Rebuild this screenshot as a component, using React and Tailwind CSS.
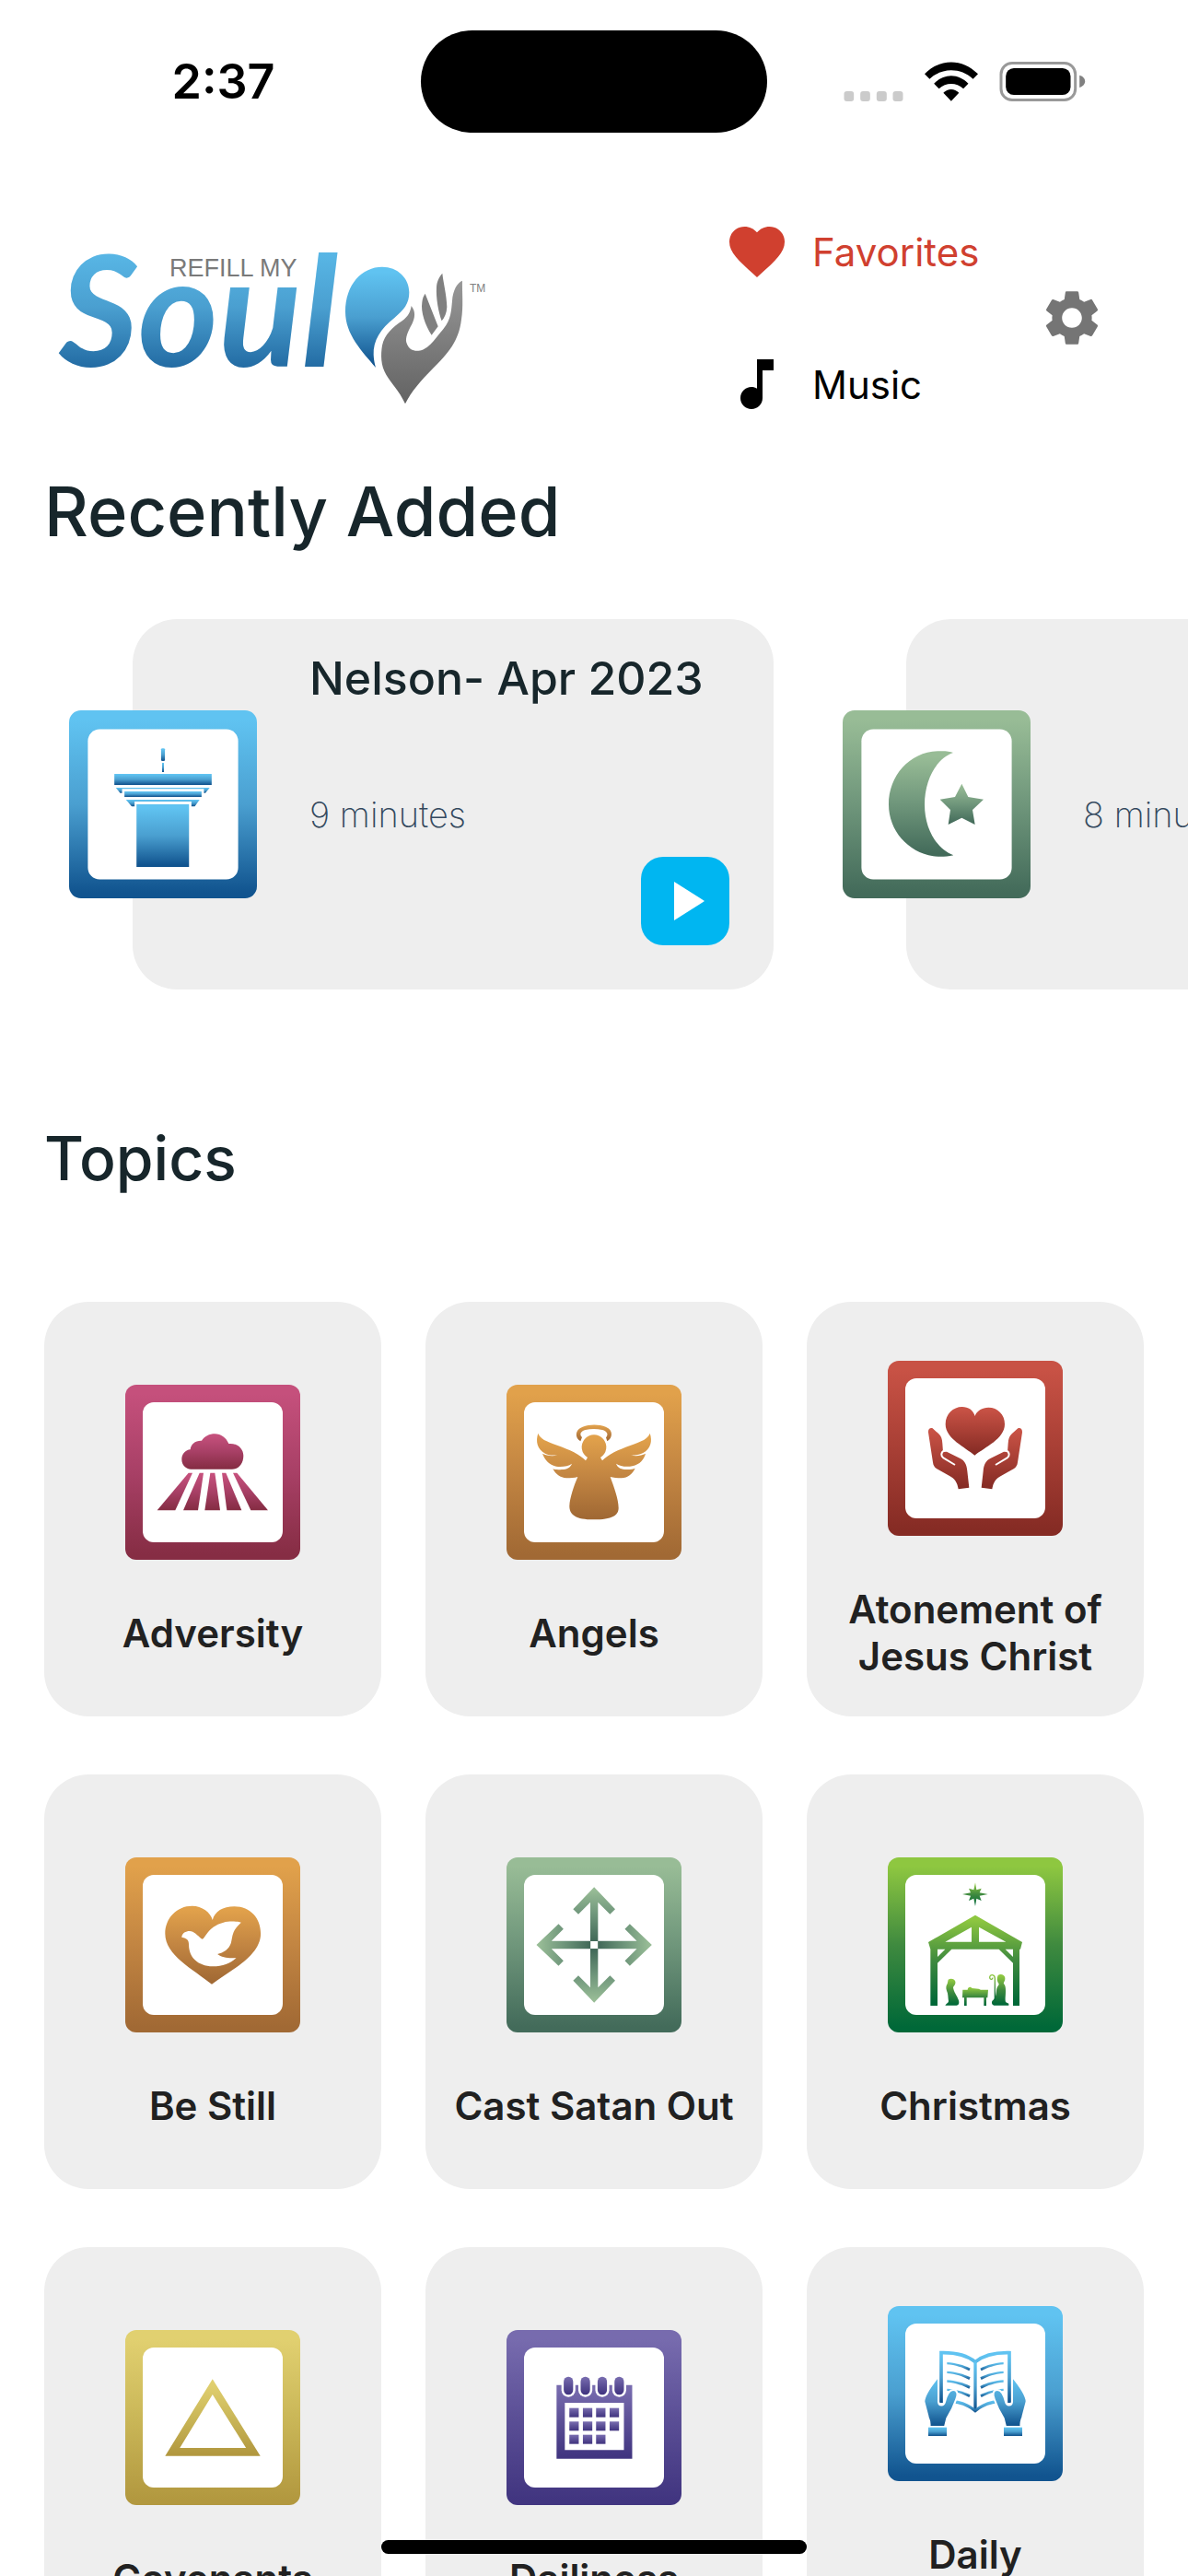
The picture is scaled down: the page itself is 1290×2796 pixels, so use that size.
import React from "react";
import { MdFavorite, MdMusicNote, MdSettings, MdPlayArrow } from "react-icons/md";

const PALETTE = {
  blue: ["#60c3f1", "#4a9fd0", "#11548f"],
  sage: ["#98bc96", "#6f967b", "#436b5a"],
  rose: ["#c5507c", "#a84066", "#862d44"],
  amber: ["#e1a14b", "#c28542", "#a16934"],
  red: ["#c85245", "#a83f35", "#852b24"],
  green: ["#8ec740", "#3f8a3f", "#006838"],
  gold: ["#e1d070", "#cab758", "#b2983f"],
  purple: ["#776bae", "#5b4f96", "#413580"],
};

function Gradients() {
  return (
    <svg className="absolute size-0" aria-hidden="true">
      <defs>
        {Object.entries(PALETTE).map(([name, stops]) => (
          <linearGradient key={name} id={name} x1="0" y1="0" x2="0" y2="1">
            <stop offset="0.05" stopColor={stops[0]} />
            <stop offset="0.5" stopColor={stops[1]} />
            <stop offset="0.97" stopColor={stops[2]} />
          </linearGradient>
        ))}
        <linearGradient id="gray" x1="0" y1="0" x2="0" y2="1">
          <stop offset="0" stopColor="#989898" />
          <stop offset="1" stopColor="#626262" />
        </linearGradient>
      </defs>
    </svg>
  );
}

function Framed({ color, box, className, children }) {
  const paint = `url(#${color})`;
  return (
    <svg viewBox="0 0 570 570" className={className} aria-hidden="true">
      <rect width="570" height="570" rx="36" fill={paint} />
      <rect x="57" y="57" width="456" height="456" rx="36" fill="#fff" />
      <svg width="570" height="570" viewBox={box} preserveAspectRatio="none" fill={paint}>
        {children}
      </svg>
    </svg>
  );
}

const PulpitIcon = ({ className }) => (
  <Framed color="blue" box="67 363 390 612" className={className}>
    <rect x="258" y="487" width="8" height="41" rx="3" />
    <rect x="260" y="534" width="4" height="30" />
    <rect x="161" y="570" width="202" height="36" />
    <path d="M164 615H359L350 632H347V619H177V632H173Z" />
    <rect x="182" y="627" width="160" height="18" />
    <path d="M185 654H338L328 676H321V660H203V676H197Z" />
    <rect x="207" y="669" width="109" height="204" />
  </Framed>
);

const CrescentIcon = ({ className }) => (
  <Framed color="sage" box="105 363 612 612" className={className}>
    <path d="M465 501C410 520 372 590 372 670C372 750 412 815 466 835C440 841 415 840 400 838C318 825 255 755 255 670C255 575 325 496 420 496C438 495 455 497 465 501Z" />
    <path d="M493 602L514 645L564 653L528 687L536 735L493 713L449 735L456 687L422 653L471 645Z" />
  </Framed>
);

const AdversityIcon = ({ className }) => (
  <Framed color="rose" box="48 67 570 570" className={className}>
    <path d="M262 342C245 342 232 328 232 310C232 292 245 279 260 278C262 260 276 248 297 249C306 235 322 227 340 227C360 227 377 240 385 259C412 256 433 275 433 298C433 324 418 342 396 342Z" />
    <path d="M254 354H267L211 476H152Z" />
    <path d="M290 354H303L285 476H237Z" />
    <path d="M325 354H340L357 476H307Z" />
    <path d="M363 354H376L427 476H379Z" />
    <path d="M399 354H412L513 476H457Z" />
  </Framed>
);

const AngelIcon = ({ className }) => (
  <Framed color="amber" box="60 67 570 570" className={className}>
    <path d="M301 251C283 240 281 214 308 204C330 195 362 195 383 204C409 214 406 240 388 251L384 239C394 227 386 218 372 214C354 210 334 210 317 214C303 218 296 227 306 238Z" />
    <path d="M163 225C168 242 190 252 225 264C265 278 300 294 318 314L324 304A40 40 0 1 1 366 304L372 314C390 294 425 278 465 264C500 252 522 242 527 225C536 250 530 275 505 289C493 295 480 298 465 296C480 301 500 298 513 291C508 310 495 326 470 332C450 336 428 332 417 324C422 338 435 343 452 343C465 343 474 341 479 339C470 358 455 370 435 371C420 371 408 369 398 367C410 400 425 440 425 468C425 492 405 506 344 506C285 506 265 490 265 462C266 435 280 395 292 367C281 370 270 371 255 371C235 370 220 358 211 341C219 344 230 344 240 343C256 343 268 337 273 324C262 332 240 336 222 333C196 326 184 310 177 291C190 298 210 301 226 296C210 298 195 296 186 291C160 277 154 250 163 225Z" />
  </Framed>
);

const CuppedHand = () => (
  <>
    <path d="M204 314C203 304 210 298 218 301L238 319C246 326 249 335 250 350L252 378L264 377L308 399C322 406 329 418 331 440L337 494L302 499C299 478 290 464 272 455L232 433C224 428 220 422 219 412Z" />
    <path d="M256 373C244 379 245 392 253 397L291 420" fill="none" stroke="#fff" strokeWidth="6" />
  </>
);

const AtonementIcon = ({ className }) => (
  <Framed color="red" box="72 81 570 570" className={className}>
    <path d="M355 389C325 362 260 335 260 287C260 255 285 231 314 231C335 231 350 242 356 261C361 244 380 233 400 233C430 233 453 256 453 287C453 335 388 362 355 389Z" />
    <CuppedHand />
    <g transform="translate(714 0) scale(-1 1)">
      <CuppedHand />
    </g>
  </Framed>
);

const BeStillIcon = ({ className }) => (
  <Framed color="amber" box="39 46 465 570" className={className}>
    <path d="M269 459C220 410 145 365 145 294C145 245 175 204 217 204C243 204 266 225 271 250C277 222 298 206 329 206C372 206 399 245 399 294C399 365 322 412 269 459Z" />
    <path
      fill="#fff"
      d="M189 306C190 292 200 286 210 286C222 286 230 300 243 312C252 312 256 272 300 258C315 253 335 254 347 258C322 285 325 300 320 325C315 345 300 357 284 361C296 373 318 376 334 373C320 390 298 401 272 401C230 399 208 370 208 330C208 315 203 309 189 306Z"
    />
  </Framed>
);

const ArrowsIcon = ({ className }) => (
  <Framed color="sage" box="0 0 570 570" className={className}>
    {[0, 90, 180, 270].map((angle) => (
      <path
        key={angle}
        transform={`rotate(${angle} 285.5 285)`}
        d="M285.5 97L354 169L337 185L298 146V273H273V146L234 185L217 169Z"
      />
    ))}
  </Framed>
);

const ChristmasIcon = ({ className }) => (
  <Framed color="green" box="72 46 570 570" className={className}>
    <path d="M357 128L361 152L377 147L371 161L398 166L371 171L377 187L361 180L357 205L352 180L336 187L342 171L315 166L342 161L336 147L352 152Z" />
    <path
      fillRule="evenodd"
      d="M357 234L510 322L504 345H501V529H480V390L434 345H280L234 390V529H211V345L204 322ZM345 273L259 321H345ZM369 273V321H457ZM234 345H259L234 370ZM455 345H480V370Z"
    />
    <path d="M269 444C276 438 290 441 292 450C294 460 287 463 285 470C287 485 297 495 303 512C306 522 302 528 296 528H259C262 522 268 522 270 515C268 500 269 490 264 480C260 470 263 462 266 458Z" />
    <path d="M316 477H332C333 468 342 466 346 472C356 474 366 472 375 477H399L397 503H393V529H385V503H329V529H321V503H315Z" />
    <path d="M431 430C440 424 452 428 454 438C455 450 448 452 450 458C455 462 456 470 456 480C456 500 453 510 457 518L466 522V528H418C410 526 409 516 414 512C421 505 424 500 426 480C427 465 434 465 434 458C428 450 426 440 431 430Z" />
    <path d="M421 512V440C421 426 404 425 404 437C404 444 412 446 414 438" fill="none" stroke="url(#green)" strokeWidth="4" />
  </Framed>
);

const TriangleIcon = ({ className }) => (
  <Framed color="gold" box="39 57 465 570" className={className}>
    <path fillRule="evenodd" d="M271 217L398 467H145ZM271 267L184 441H360Z" />
  </Framed>
);

const CALENDAR_COLUMNS = [1220, 1256, 1291, 1327];
const CALENDAR_ROWS = [309, 353, 396];

const CalendarIcon = ({ className }) => (
  <Framed color="purple" box="1053 55 465 570" className={className}>
    <path fillRule="evenodd" d="M1186 234H1387V474H1186ZM1208 292V446H1365V292Z" />
    {[1205, 1250, 1295, 1340].map((x) => (
      <g key={x}>
        <rect x={x - 6} y="200" width="37" height="73" rx="18" ry="22" fill="#fff" />
        <rect x={x} y="207" width="25" height="59" rx="12" ry="16" />
      </g>
    ))}
    {CALENDAR_ROWS.map((y, row) =>
      CALENDAR_COLUMNS.slice(0, row === 2 ? 3 : 4).map((x) => (
        <rect key={`${x}-${y}`} x={x} y={y} width="25" height="30" />
      ))
    )}
  </Framed>
);

const ReadingSide = () => (
  <>
    {[0, 29, 58, 86].map((dy) => (
      <path
        key={dy}
        transform={`translate(0 ${dy})`}
        d="M505 402C532 404 560 411 581 422L577 430C558 419 532 411 505 409Z"
      />
    ))}
    <path
      stroke="#fff"
      strokeWidth="6"
      d="M477 448V531C479 546 495 544 498 531C502 515 510 492 525 492C540 492 541 508 535 522C527 545 517 565 505 584L498 612H448C451 600 447 590 443 580L430 530C430 508 455 475 477 448Z"
    />
    <rect x="444" y="614" width="60" height="28" />
  </>
);

const ReadingIcon = ({ className }) => (
  <Framed color="blue" box="312 219 570 570" className={className}>
    <path
      fill="none"
      stroke="url(#blue)"
      strokeWidth="11"
      d="M486 534V371C530 370 568 377 597 401C626 377 668 370 708 371V534"
    />
    <rect x="592" y="400" width="10" height="160" />
    <path d="M532 526C555 529 578 539 597 554C616 539 639 529 662 526V536C640 539 618 548 597 566C576 548 554 539 532 536Z" />
    <ReadingSide />
    <g transform="translate(1194 0) scale(-1 1)">
      <ReadingSide />
    </g>
  </Framed>
);

function Logo() {
  return (
    <svg
      viewBox="0 10 500 230"
      className="h-[230px] w-[500px] shrink-0"
      role="img"
      aria-label="Refill My Soul"
    >
      <text x="24" y="178" fontFamily="Lato, sans-serif" fontSize="167" fontWeight="700" fontStyle="italic" fill="url(#blue)">
        Soul
      </text>
      <text x="144" y="80" fontFamily="'Liberation Sans Narrow', 'Liberation Sans', sans-serif" fontSize="27" fill="#7a7a7a">
        REFILL MY
      </text>
      <g transform="scale(0.33333)">
        <path
          fill="url(#blue)"
          d="M1125 209C1175 209 1213 245 1213 292C1213 330 1195 350 1165 375C1120 410 1095 450 1097 495C1098 515 1101 525 1104 537C1060 485 1005 430 1005 355C1005 265 1060 209 1125 209Z"
        />
        <path
          fill="url(#gray)"
          d="M1220 336C1235 355 1232 375 1222 395C1208 420 1200 440 1204 455C1212 478 1225 483 1243 482C1275 480 1300 440 1325 410C1350 380 1350 350 1353 320C1355 285 1370 260 1386 254C1385 290 1390 340 1383 380C1375 450 1340 490 1290 540C1250 580 1220 615 1200 655C1180 610 1155 590 1138 560C1120 530 1120 495 1125 465C1132 430 1160 405 1190 385C1210 370 1217 355 1220 336Z"
        />
        <g fill="#808080">
          <path d="M1321 230C1325 265 1335 300 1336 340C1335 360 1328 375 1319 385C1308 355 1300 310 1302 275C1303 255 1312 240 1321 230Z" />
          <path d="M1265 296L1307 403L1286 431C1265 400 1250 355 1255 325C1256 312 1260 303 1265 296Z" />
        </g>
      </g>
      <text x="470" y="97" fontFamily="'Liberation Sans', sans-serif" fontSize="12" fill="#808080">
        TM
      </text>
    </svg>
  );
}

function StatusBar() {
  return (
    <div className="mb-6 grid h-[177px] shrink-0 grid-cols-[1fr_376px_1fr] items-center">
      <time className="pl-7 text-center text-[52px] font-semibold text-black">2:37</time>
      <div className="h-[111px] rounded-full bg-black" />
      <div className="flex items-end justify-center gap-[23px] pr-7">
        <svg viewBox="0 0 192 33" className="h-[11px] w-[65px]" fill="#cbcbcb" aria-label="No signal">
          <rect width="32" height="33" rx="9" />
          <rect x="53" width="32" height="33" rx="9" />
          <rect x="106" width="33" height="33" rx="9" />
          <rect x="159" width="33" height="33" rx="9" />
        </svg>
        <svg viewBox="721 195 171 126" className="h-[43px] w-[58px]" aria-label="Wi-Fi">
          <path d="M721 234C770 183 842 183 892 234L876 250C836 213 776 213 737 250Z" />
          <path d="M751 265C782 231 830 231 861 265L845 281C823 260 789 260 767 281Z" />
          <path d="M806 321L781 294C795 279 817 279 831 294Z" />
        </svg>
        <svg viewBox="959 195 279 129" className="h-[43px] w-[94px]" aria-label="Battery full">
          <rect x="963.5" y="199.5" width="242" height="120" rx="36" fill="none" stroke="#999" strokeWidth="9" />
          <rect x="979" y="216" width="211" height="87" rx="26" />
          <path d="M1219 239C1243 245 1243 273 1219 279Z" fill="#808080" />
        </svg>
      </div>
    </div>
  );
}

function Header() {
  return (
    <header className="flex items-center pr-[90px] pl-10">
      <Logo />
      <nav className="mr-[54px] ml-auto flex w-72 flex-col">
        <button type="button" className="flex h-36 items-center gap-6 text-[42px] text-[#d0402f]">
          <MdFavorite className="size-[72px]" />
          Favorites
        </button>
        <button type="button" className="flex h-36 items-center gap-6 text-[42px] text-black">
          <MdMusicNote className="size-[72px]" />
          Music
        </button>
      </nav>
      <button type="button" aria-label="Settings" className="text-[#757575]">
        <MdSettings className="size-[72px]" />
      </button>
    </header>
  );
}

const RECENT = [
  { title: "Nelson- Apr 2023", length: "9 minutes", Icon: PulpitIcon },
  { title: "", length: "8 minutes", Icon: CrescentIcon },
];

function RecentCard({ title, length, Icon }) {
  return (
    <article className="flex w-[840px] shrink-0 items-center">
      <Icon className="relative z-10 ml-[75px] size-[204px] shrink-0" />
      <div className="-ml-[135px] flex h-[402px] w-[696px] shrink-0 flex-col rounded-[48px] bg-[#eeeeee] pt-8 pr-12 pb-12 pl-48">
        <h3 className="h-16 text-[50px] leading-[64px] font-medium whitespace-nowrap">{title}</h3>
        <p className="mt-20 text-[38px] leading-[72px] font-extralight text-[#34495e]">{length}</p>
        <button
          type="button"
          aria-label="Play"
          className="mt-auto flex size-24 items-center justify-center self-end rounded-3xl bg-[#00b6f1] text-white"
        >
          <MdPlayArrow className="size-[72px]" />
        </button>
      </div>
    </article>
  );
}

const TOPICS = [
  { name: "Adversity", Icon: AdversityIcon },
  { name: "Angels", Icon: AngelIcon },
  { name: "Atonement of Jesus Christ", Icon: AtonementIcon },
  { name: "Be Still", Icon: BeStillIcon },
  { name: "Cast Satan Out", Icon: ArrowsIcon },
  { name: "Christmas", Icon: ChristmasIcon },
  { name: "Covenants", Icon: TriangleIcon },
  { name: "Dailiness", Icon: CalendarIcon },
  { name: "Daily", Icon: ReadingIcon, tall: true },
];

function TopicCard({ name, Icon, tall }) {
  return (
    <a
      href="#topic"
      className="flex h-[450px] flex-col items-center justify-center rounded-[48px] bg-[#eeeeee] px-4 pt-6 text-center text-[42px] leading-[51px] font-semibold text-[#212121]"
    >
      <Icon className="mb-[54px] size-[190px]" />
      <span className={tall ? "min-h-[102px]" : ""}>{name}</span>
    </a>
  );
}

export default function App() {
  return (
    <div className="relative flex h-screen flex-col overflow-hidden bg-white font-['Inter',sans-serif] text-[#17262b]">
      <Gradients />
      <StatusBar />
      <main className="min-h-0 flex-1 overflow-x-hidden overflow-y-auto [scrollbar-width:none]">
        <Header />
        <section>
          <h2 className="mt-[18px] mb-[69px] px-12 text-[74px] leading-[96px] font-medium">Recently Added</h2>
          <div className="flex overflow-x-auto [scrollbar-width:none]">
            {RECENT.map((item) => (
              <RecentCard key={item.length} {...item} />
            ))}
          </div>
        </section>
        <section className="px-12 pb-24">
          <h2 className="mt-[135px] mb-[108px] text-[66px] leading-[96px] font-medium">Topics</h2>
          <div className="grid grid-cols-3 gap-x-12 gap-y-[63px]">
            {TOPICS.map((topic) => (
              <TopicCard key={topic.name} {...topic} />
            ))}
          </div>
        </section>
      </main>
      <div className="absolute bottom-6 left-1/2 h-[15px] w-[462px] -translate-x-1/2 rounded-full bg-black" />
    </div>
  );
}
